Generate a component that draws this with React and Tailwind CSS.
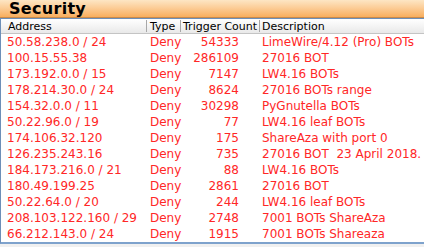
import React from "react";

const rows = [
  ["50.58.238.0 / 24", "Deny", "54333", "LimeWire/4.12 (Pro) BOTs"],
  ["100.15.55.38", "Deny", "286109", "27016 BOT"],
  ["173.192.0.0 / 15", "Deny", "7147", "LW4.16 BOTs"],
  ["178.214.30.0 / 24", "Deny", "8624", "27016 BOTs range"],
  ["154.32.0.0 / 11", "Deny", "30298", "PyGnutella BOTs"],
  ["50.22.96.0 / 19", "Deny", "77", "LW4.16 leaf BOTs"],
  ["174.106.32.120", "Deny", "175", "ShareAza with port 0"],
  ["126.235.243.16", "Deny", "735", "27016 BOT  23 April 2018."],
  ["184.173.216.0 / 21", "Deny", "88", "LW4.16 BOTs"],
  ["180.49.199.25", "Deny", "2861", "27016 BOT"],
  ["50.22.64.0 / 20", "Deny", "244", "LW4.16 leaf BOTs"],
  ["208.103.122.160 / 29", "Deny", "2748", "7001 BOTs ShareAza"],
  ["66.212.143.0 / 24", "Deny", "1915", "7001 BOTs Shareaza"],
];

const App = () => {
  return (
    <div className="w-[424px] h-[247px] overflow-hidden bg-white font-['DejaVu_Sans',sans-serif]">
      {/* Title bar */}
      <div className="h-[18px] bg-gradient-to-b from-[#fde6c4] to-[#f8ae5c] border-b border-[#c98a4a] pl-[9px] flex items-center">
        <span className="text-[16px] font-bold text-black leading-none tracking-[0.3px]">Security</span>
      </div>

      <div className="border-l border-[#6d8fb8] border-t border-t-[#6d8fb8] border-b-2 border-b-[#7ea2cc] h-[226px] overflow-hidden">
        {/* Header */}
        <div className="h-[15px] flex items-center bg-gradient-to-b from-white to-[#e9e9e9] border-b border-[#c4c4c4] text-[11px] text-black leading-none whitespace-nowrap">
          <div className="w-[146px] shrink-0 pl-[7px] border-r border-[#a8a8a8] h-[12px] flex items-center">Address</div>
          <div className="w-[34px] shrink-0 pl-[3px] border-r border-[#a8a8a8] h-[12px] flex items-center">Type</div>
          <div className="w-[79px] shrink-0 pl-[2px] border-r border-[#a8a8a8] h-[12px] flex items-center">Trigger Count</div>
          <div className="pl-[2px] flex items-center">Description</div>
        </div>

        {/* Rows */}
        <div className="text-[12px] text-[#ff2727] leading-none">
          {rows.map(([addr, type, count, desc]) => (
            <div key={addr} className="h-[16px] flex items-center">
              <div className="w-[146px] shrink-0 pl-[6px] whitespace-nowrap">{addr}</div>
              <div className="w-[34px] shrink-0 pl-[3px]">{type}</div>
              <div className="w-[79px] shrink-0 pr-[21px] text-right">{count}</div>
              <div className="pl-[2px] whitespace-pre">{desc}</div>
            </div>
          ))}
        </div>
      </div>
      <div className="h-[3px] bg-[#f0f0f0]" />
    </div>
  );
};

export default App;
